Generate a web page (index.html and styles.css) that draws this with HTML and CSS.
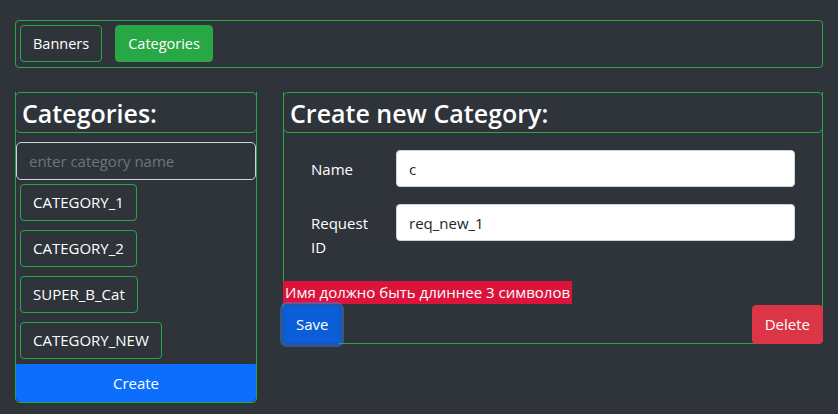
FILE: index.html
```html
<!DOCTYPE html>
<html lang="en">
<head>
<meta charset="utf-8">
<title>Categories</title>
<link rel="stylesheet" href="styles.css">
</head>
<body>
<div class="page">
  <nav class="tabs">
    <button class="btn btn-outline">Banners</button>
    <button class="btn btn-success">Categories</button>
  </nav>
  <div class="main">
    <section class="panel list-panel">
      <h2 class="panel-title">Categories:</h2>
      <input class="search" type="text" placeholder="enter category name">
      <div class="items">
        <button class="btn btn-outline item">CATEGORY_1</button>
        <button class="btn btn-outline item">CATEGORY_2</button>
        <button class="btn btn-outline item">SUPER_B_Cat</button>
        <button class="btn btn-outline item">CATEGORY_NEW</button>
      </div>
      <button class="btn create">Create</button>
    </section>
    <section class="panel form-panel">
      <h2 class="panel-title">Create new Category:</h2>
      <div class="fields">
        <label class="field-label" for="name">Name</label>
        <input class="field-input" id="name" type="text" value="c">
        <label class="field-label" for="rid">Request ID</label>
        <input class="field-input" id="rid" type="text" value="req_new_1">
      </div>
      <div class="error-row"><span class="error">Имя должно быть длиннее 3 символов</span></div>
      <div class="actions">
        <button class="btn btn-primary focused">Save</button>
        <button class="btn btn-danger">Delete</button>
      </div>
    </section>
  </div>
</div>
</body>
</html>
```

FILE: styles.css
```css
* { box-sizing: border-box; }

html, body {
  margin: 0;
  background: #2f343b;
  color: #fff;
  font-family: "Open Sans", "Noto Sans", sans-serif;
}

.page {
  padding: 20px 15px 0;
}

.btn {
  font-family: inherit;
  font-size: 14.5px;
  line-height: 23px;
  padding: 6px 12px;
  border: 1px solid transparent;
  border-radius: 4px;
  color: #fff;
  background: transparent;
  cursor: pointer;
}

.btn-outline { border-color: #28a745; }
.btn-success { background: #28a745; border-color: #28a745; }
.btn-primary { background: #0d6efd; border-color: #0d6efd; }
.btn-danger { background: #dc3545; border-color: #dc3545; }
.btn-primary.focused {
  background: #0b5ed7;
  border-color: #0a58ca;
  box-shadow: 0 0 0 3px rgba(49, 132, 253, 0.45);
}

.tabs {
  display: flex;
  gap: 13px;
  padding: 4px 4px 5px;
  border: 1px solid #28a745;
  border-radius: 4px;
}

.main {
  display: grid;
  grid-template-columns: 242px 1fr;
  gap: 26px;
  margin-top: 24px;
  align-items: start;
}

.panel {
  border: 1px solid #28a745;
  border-top: none;
  border-radius: 0 0 5px 5px;
  display: flex;
  flex-direction: column;
}

.panel-title {
  margin: 0 -1px;
  padding: 0 6px;
  height: 41px;
  line-height: 40px;
  font-size: 25px;
  font-weight: 600;
  border: 1px solid #28a745;
  border-radius: 5px;
}

.search {
  margin: 9px 0 0;
  height: 38px;
  padding: 0 12px;
  font-family: inherit;
  font-size: 15px;
  color: #fff;
  background: transparent;
  border: 1px solid #ced4da;
  border-radius: 5px;
  outline: none;
}
.search::placeholder { color: #6c757d; }

.items {
  display: flex;
  flex-direction: column;
  align-items: flex-start;
  gap: 9px;
  padding: 4px 4px 5px;
}

.item { font-size: 15px; }

.create {
  background: #0d6efd;
  border-color: #0d6efd;
  border-radius: 0 0 5px 5px;
  height: 38px;
  padding: 0;
  font-size: 15px;
}

.fields {
  display: grid;
  grid-template-columns: 85px 1fr;
  row-gap: 17px;
  align-items: start;
  padding: 17px 27px 22px 27px;
}

.field-label {
  padding: 7px 12px 0 0;
  font-size: 15px;
  line-height: 24px;
}

.field-input {
  height: 37px;
  padding: 0 12px;
  font-family: inherit;
  font-size: 15px;
  color: #212529;
  background: #fff;
  border: 1px solid #ced4da;
  border-radius: 4px;
  outline: none;
}

.error-row {
  margin: 0 -1px;
}

.error {
  display: inline-block;
  background: #dc143c;
  color: #fff;
  font-size: 15px;
  line-height: 23px;
  padding: 0 2px;
}

.actions {
  display: flex;
  justify-content: space-between;
  margin: 1px -1px -1px;
}

.actions .btn {
  font-size: 15px;
  line-height: 25px;
}
```
